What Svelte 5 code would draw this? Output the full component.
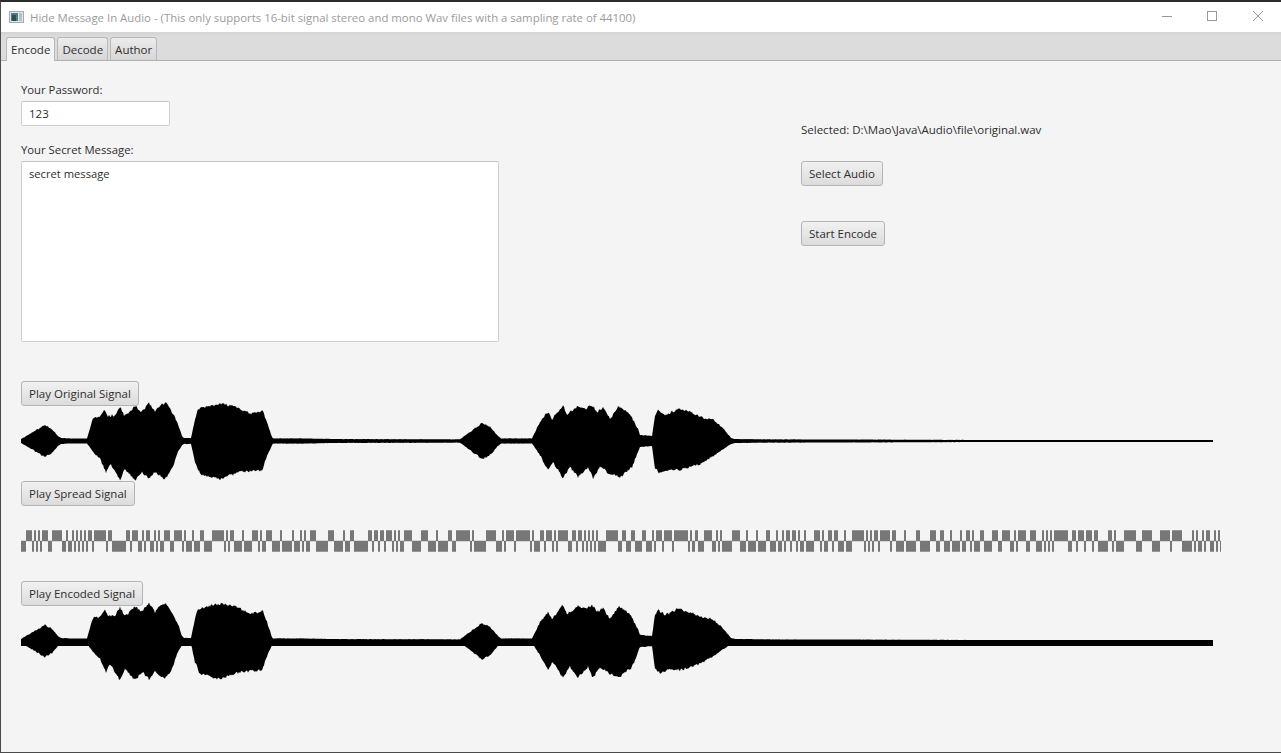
<script>
  function rng(seed) {
    let s = seed;
    return () => {
      s = (s * 1664525 + 1013904223) >>> 0;
      return s / 4294967296;
    };
  }

  const intro = [[21,2],[33,9],[45,16],[52,12],[58,5],[61,3],[70,2.5],[87,2.5]];
  const quiet = [[273,2.6],[300,2.6],[340,1.9],[460,1.7],[470,9],[482,18],[490,14],[498,5],[501,2.6],[532,2.6]];
  const tail = [[735,2],[760,1.7],[900,1.3],[1000,1],[1213,1]];

  const upper = [
    ...intro,
    [93,23],[100,24],[105,31],[108,25],[115,26],[120,34],[124,26],[128,27],[135,35],[141,29],[149,37.5],[155,29],[162,37],[166,38],
    [172,29],[178,17],[182,5],[184,3],[191,3],[195,22],[198,31.5],[205,34],[220,37],[235,35],[250,27],[263,30],[268,16],[272,4],
    ...quiet,
    [540,19],[548,29],[552,22],[563,36],[567,27],[578,35],[585,32],[592,36],[597,29],[603,33],[610,22],[619,35],[630,27],[638,12],
    [640,6],[652,5],[655,26],[658,31],[665,26],[678,32],[690,29],[700,24],[712,22],[722,14],[731,3],
    ...tail
  ];
  const lower = [
    ...intro,
    [94,12],[100,18],[106,31],[110,23],[120,39],[125,28],[135,39],[142,31],[149,38],[155,31],[165,38],[172,28],[178,11],[182,4],
    [184,3],[191,3],[195,21],[200,33],[220,38],[240,31],[262,29],[268,13],[272,4],
    ...quiet,
    [540,14],[548,29],[553,21],[563,37],[570,26],[578,36],[588,26],[593,37],[600,26],[610,33],[620,36],[632,26],[638,11],
    [640,6],[652,5],[655,28],[660,32],[670,28],[680,29],[700,23],[715,14],[731,3],
    ...tail
  ];

  function level(points, x) {
    for (let i = 1; i < points.length; i++) {
      const [x1, h1] = points[i];
      if (x <= x1) {
        const [x0, h0] = points[i - 1];
        return h0 + ((h1 - h0) * (x - x0)) / (x1 - x0);
      }
    }
    return 1;
  }

  function wavePath(cy, seed) {
    const r = rng(seed);
    const up = [];
    const down = [];
    for (let x = 21; x <= 1213; x++) {
      const hu = level(upper, x);
      const hd = level(lower, x);
      const au = Math.min(1.3, hu * 0.06);
      const ad = Math.min(1.3, hd * 0.06);
      up.push(`${x} ${(cy - hu - (r() - 0.5) * 2 * au).toFixed(1)}`);
      down.unshift(`${x} ${(cy + hd + (r() - 0.5) * 2 * ad).toFixed(1)}`);
    }
    return `M${up.join('L')}L${down.join('L')}Z`;
  }

  const spreadTop = [
    [0, [5,11,13,15,17,19,21,27,31,41,45,47,51,53,55,57,59,61,63,65,67,71,73,85,87,91,105,109,111,117,121,123,125,129,133,135,137,139,143,149,153,161,163,165,171,173,179,183,191,203,205,207,209,213,221,223,231,237,239,241,245,251,259,261,271,273,279,281,283,285,289,295]],
    [300, [7,13,22,24,29,33,47,51,53,57,59,63,65,71,73,75,77,79,83,91,100,107,115,117,127,131,135,149,151,153,165,175,181,183,185,193,195,209,211,213,219,223,225,231,233,235,237,247,251,255,257,261,263,265,267,269,271,273,275,277,285,297]],
    [600, [1,5,10,14,21,25,31,33,35,41,43,51,53,67,69,71,74,77,83,91,95,97,99,101,111,119,125,127,135,137,145,149,155,157,161,163,165,169,171,175,177,179,183,185,193,199,201,203,207,211,213,217,223,225,231,243,245,247,249,251,253,257,259,269,271,275,283,285,295,299]],
    [900, [9,15,19,23,29,31,39,41,45,49,51,53,59,63,71,77,81,89,93,95,97,105,109,115,121,123,125,127,129,131,133,147,151,155,157,163,165,171,173,177,187,191,193,195,203,215,221,231,239,249,251,261,271,273,275,277,281,283,285,289,293,295,297,299]]
  ];

  function spreadPath() {
    let d = '';
    let cursor = 21;
    for (const [offset, edges] of spreadTop) {
      for (let i = 0; i < edges.length; i += 2) {
        const a = 21 + offset + edges[i];
        const b = 21 + offset + edges[i + 1];
        if (a > cursor) d += `M${cursor} 540.7H${a}V551.7H${cursor}Z`;
        d += `M${a} 530.3H${b}V541.3H${a}Z`;
        cursor = b;
      }
    }
    if (cursor < 1221) d += `M${cursor} 540.7H1221V551.7H${cursor}Z`;
    return d;
  }

  const original = wavePath(40, 11);
  const encoded = wavePath(40, 29);
  const spread = spreadPath();
</script>

<div class="window">
  <header class="titlebar">
    <svg class="appicon" width="15" height="12" viewBox="0 0 15 12" aria-hidden="true">
      <rect x="0.5" y="0.5" width="14" height="11" fill="#e2e6e8" stroke="#a3a9ad" />
      <rect x="2" y="2" width="7" height="8" fill="#4d7f86" />
      <rect x="3" y="4" width="4" height="6" fill="#2f4d57" />
      <rect x="10" y="2" width="3" height="8" fill="#b8c0c2" />
    </svg>
    <span class="title">Hide Message In Audio - (This only supports 16-bit signal stereo and mono Wav files with a sampling rate of 44100)</span>
    <div class="controls">
      <svg width="10" height="10" viewBox="0 0 10 10" aria-hidden="true"><path d="M0 5.5h10" stroke="#999" fill="none" /></svg>
      <svg class="max" width="10" height="10" viewBox="0 0 10 10" aria-hidden="true"><rect x="0.5" y="0.5" width="9" height="9" stroke="#999" fill="none" /></svg>
      <svg width="10" height="10" viewBox="0 0 10 10" aria-hidden="true"><path d="M0 0l10 10M10 0L0 10" stroke="#999" fill="none" /></svg>
    </div>
  </header>

  <nav class="tabs">
    <div class="tab active">Encode</div>
    <div class="tab">Decode</div>
    <div class="tab">Author</div>
  </nav>

  <main class="content">
    <section class="top">
      <div class="form">
        <label for="pw">Your Password:</label>
        <input id="pw" class="pw" type="text" value="123" readonly />
        <label for="msg" class="second">Your Secret Message:</label>
        <textarea id="msg" class="msg" readonly>secret message</textarea>
      </div>
      <div class="side">
        <p class="selected">Selected: D:\Mao\Java\Audio\file\original.wav</p>
        <button class="btn">Select Audio</button>
        <button class="btn start">Start Encode</button>
      </div>
    </section>

    <section class="signals">
      <button class="btn">Play Original Signal</button>
      <svg class="wave" width="1200" height="80" viewBox="21 0 1200 80" aria-hidden="true"><path d={original} fill="#000" /></svg>
      <button class="btn">Play Spread Signal</button>
      <svg class="spread" width="1200" height="22" viewBox="21 530 1200 22" aria-hidden="true"><path d={spread} fill="#777" /></svg>
      <button class="btn third">Play Encoded Signal</button>
      <svg class="wave" width="1200" height="80" viewBox="21 0 1200 80" aria-hidden="true">
        <path d={encoded} fill="#000" />
        <rect x="21" y="39" width="1192" height="6" fill="#000" />
      </svg>
    </section>
  </main>
</div>

<style>
  :global(body) {
    margin: 0;
    overflow: hidden;
    background: #f4f4f4;
  }
  .window {
    box-sizing: border-box;
    width: 1281px;
    height: 753px;
    display: flex;
    flex-direction: column;
    border-top: 2px solid #2b2b2b;
    border-left: 1px solid #4a4a4a;
    border-bottom: 1px solid #4a4a4a;
    font-family: "Open Sans", "Noto Sans", sans-serif;
    font-size: 11.5px;
    color: #2e2e2e;
    background: #f4f4f4;
  }
  .titlebar {
    flex: none;
    height: 30px;
    display: flex;
    align-items: center;
    background: #fff;
    padding-left: 8px;
  }
  .appicon {
    flex: none;
    margin-right: 6px;
  }
  .title {
    color: #9b9b9b;
    font-size: 11.4px;
  }
  .controls {
    margin-left: auto;
    margin-top: -2px;
    display: flex;
    gap: 36px;
    padding-right: 18px;
  }
  .max {
    margin-left: -1px;
  }
  .tabs {
    flex: none;
    box-sizing: border-box;
    height: 29px;
    display: flex;
    align-items: flex-end;
    gap: 2px;
    padding-left: 5px;
    background: linear-gradient(#d4d4d4, #dcdcdc 5px);
    border-bottom: 1px solid #b0b0b0;
  }
  .tab {
    box-sizing: border-box;
    height: 23px;
    padding: 0 4px;
    display: flex;
    align-items: center;
    border: 1px solid #b8b8b8;
    border-bottom: none;
    border-radius: 3px 3px 0 0;
    background: linear-gradient(#ececec, #d6d6d6);
    color: #2e2e2e;
    font-size: 11.5px;
  }
  .tab.active {
    height: 24px;
    margin-bottom: -1px;
    background: #f4f4f4;
  }
  .content {
    flex: 1;
    padding: 21px 0 0 20px;
  }
  .top {
    display: grid;
    grid-template-columns: 780px 1fr;
  }
  .form {
    display: flex;
    flex-direction: column;
    align-items: flex-start;
  }
  label {
    height: 16px;
    line-height: 16px;
    margin-bottom: 3px;
    font-size: 11.3px;
  }
  .second {
    margin-top: 16px;
  }
  .pw,
  .msg {
    box-sizing: border-box;
    margin: 0;
    font: inherit;
    color: #2e2e2e;
    background: #fff;
    border: 1px solid #d0d0d0;
    border-top-color: #c4c4c4;
    border-radius: 2px;
    outline: none;
    padding: 0 7px;
  }
  .pw {
    width: 149px;
    height: 25px;
  }
  .msg {
    width: 478px;
    height: 181px;
    padding: 4px 7px;
    font-size: 11.2px;
    resize: none;
    overflow: hidden;
  }
  .side {
    display: flex;
    flex-direction: column;
    align-items: flex-start;
  }
  .selected {
    margin: 40px 0 23px;
    height: 16px;
    line-height: 16px;
  }
  .btn {
    box-sizing: border-box;
    display: block;
    height: 25px;
    margin: 0;
    padding: 0 7px;
    font: inherit;
    color: #2e2e2e;
    border: 1px solid #b4b4b4;
    border-radius: 3px;
    background: linear-gradient(#f1f1f1, #dcdcdc);
  }
  .start {
    margin-top: 35px;
  }
  .signals {
    margin-top: 39px;
  }
  .wave {
    display: block;
    margin-top: -5px;
    position: relative;
  }
  .spread {
    display: block;
    margin-top: 24px;
  }
  .third {
    margin-top: 29px;
  }
</style>
